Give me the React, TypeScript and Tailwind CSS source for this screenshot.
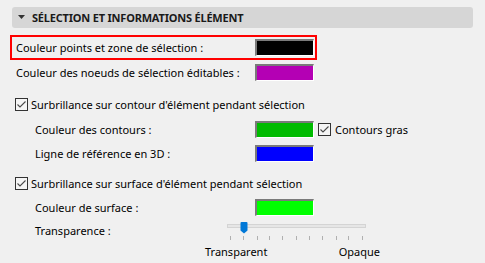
import React from "react";

const font = { fontFamily: '"Noto Sans", "Open Sans", sans-serif' };

function Swatch({ color }: { color: string }) {
  return (
    <div
      className="w-[59px] h-[17px] border-t-2 border-l-2 border-r border-b border-t-[#7a7a7a] border-l-[#7a7a7a] border-r-white border-b-white shrink-0"
      style={{ backgroundColor: color }}
    />
  );
}

function Check() {
  return (
    <svg width="13" height="13" viewBox="0 0 13 13" className="shrink-0">
      <rect x="0.5" y="0.5" width="12" height="12" fill="#f5f5f5" stroke="#333333" />
      <path d="M2.5 6.5 L5 9 L10.5 3.5" fill="none" stroke="#4a4a4a" strokeWidth="1.1" />
    </svg>
  );
}

export default function App() {
  const ticks = [230, 243, 257, 269, 282, 296, 309, 322, 336, 348, 362];
  return (
    <div
      className="w-[485px] h-[263px] bg-[#f0f0f0] overflow-hidden flex flex-col text-[11px] text-[#000000] leading-none"
      style={font}
    >
      <div className="mt-[7px] mx-[12px] h-[21px] rounded-[3px] bg-[#d6d6d6] flex items-center">
        <svg width="8" height="5" viewBox="0 0 8 5" className="ml-[6px]">
          <path d="M0 0 L7 0 L3.5 4 Z" fill="#333333" />
        </svg>
        <span className="ml-[6px] font-bold text-[#1a1a1a] tracking-[-0.2px]">SÉLECTION ET INFORMATIONS ÉLÉMENT</span>
      </div>

      <div className="mt-[7px] ml-[10px] w-[307px] h-[25px] border-2 border-[#ff0000] flex items-center justify-between pl-[4px] pr-[1px]">
        <span>Couleur points et zone de sélection :</span>
        <Swatch color="#000000" />
      </div>

      <div className="mt-[4px] ml-[16px] w-[298px] h-[17px] flex items-center justify-between">
        <span>Couleur des noeuds de sélection éditables :</span>
        <Swatch color="#b400b4" />
      </div>

      <div className="mt-[17px] ml-[15px] h-[13px] flex items-center gap-[3px]">
        <Check />
        <span>Surbrillance sur contour d'élément pendant sélection</span>
      </div>

      <div className="mt-[10px] ml-[35px] h-[17px] flex items-center">
        <span className="w-[220px]">Couleur des contours :</span>
        <Swatch color="#00bb00" />
        <div className="ml-[4px] flex items-center gap-[4px]">
          <Check />
          <span>Contours gras</span>
        </div>
      </div>

      <div className="mt-[7px] ml-[35px] h-[17px] flex items-center">
        <span className="w-[220px]">Ligne de référence en 3D :</span>
        <Swatch color="#0000ff" />
      </div>

      <div className="mt-[15px] ml-[15px] h-[13px] flex items-center gap-[3px]">
        <Check />
        <span>Surbrillance sur surface d'élément pendant sélection</span>
      </div>

      <div className="mt-[9px] ml-[35px] h-[17px] flex items-center">
        <span className="w-[220px]">Couleur de surface :</span>
        <Swatch color="#00ff00" />
      </div>

      <div className="mt-[6px] ml-[35px] h-[19px] flex items-start">
        <span className="w-[192px] mt-[3px]">Transparence :</span>
        <div className="relative w-[140px] h-[19px]">
          <div className="absolute left-0 top-[2px] w-[139px] h-[4px] bg-[#e6e6e6] border border-[#d4d4d4]" />
          <svg width="8" height="12" viewBox="0 0 8 12" className="absolute left-[13px] top-0">
            <path d="M0.5 1 Q0.5 0 1.5 0 L6.5 0 Q7.5 0 7.5 1 L7.5 8.5 L4 11.5 L0.5 8.5 Z" fill="#0078d7" />
          </svg>
          {ticks.map((x) => (
            <div
              key={x}
              className="absolute top-[14px] w-px h-[4px] bg-[#b0b0b0]"
              style={{ left: x - 227 }}
            />
          ))}
        </div>
      </div>

      <div className="mt-[5px] ml-[205px] w-[175px] flex justify-between">
        <span>Transparent</span>
        <span>Opaque</span>
      </div>
    </div>
  );
}
